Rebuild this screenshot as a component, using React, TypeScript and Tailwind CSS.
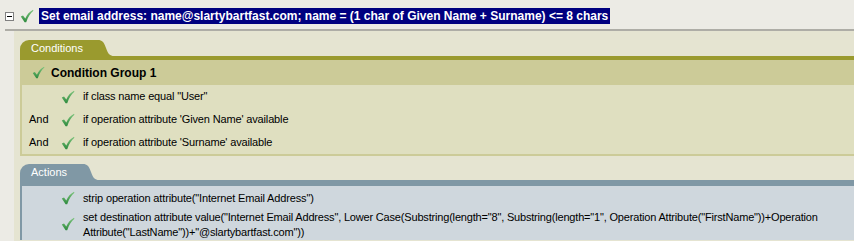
import type { ReactNode } from 'react'

const FONT = { fontFamily: '"Liberation Sans", Arial, sans-serif' }

function Check({ className = '' }: { className?: string }) {
  return (
    <svg viewBox="0 0 14 14" className={className} aria-hidden>
      <defs>
        <linearGradient id="chk" x1="0" y1="0" x2="0" y2="1">
          <stop offset="0" stopColor="#7cc47c" />
          <stop offset="1" stopColor="#2e8b3e" />
        </linearGradient>
      </defs>
      <path d="M0.8 7.6 L3 6.4 L5.3 9.4 C7 5.5 9.5 2.8 13 0.8 L13.4 1.7 C10.5 4 8.2 7.5 6.2 13.2 L4.6 13.2 Z" fill="url(#chk)" />
    </svg>
  )
}

function Tab({ label, color, bodyW }: { label: string; color: string; bodyW: string }) {
  return (
    <div className="flex items-end h-[16px]">
      <div className={`${bodyW} h-full rounded-tl-[9px] pl-[11px] text-[11px] leading-[16px] text-white`} style={{ backgroundColor: color }}>
        {label}
      </div>
      <svg width="16" height="16" viewBox="0 0 16 16" className="block">
        <path d="M0 0 C4 0 6 2 8 8 C10 14 12 16 16 16 L0 16 Z" fill={color} />
      </svg>
    </div>
  )
}

function Row({ and, children, h = 'h-[23px]' }: { and?: boolean; children: ReactNode; h?: string }) {
  return (
    <div className={`flex items-center ${h}`}>
      <span className="w-[39px] pl-[7px] text-[11px]">{and ? 'And' : ''}</span>
      <Check className="w-[14px] h-[14px]" />
      <span className="ml-[8px] text-[11px] tracking-[-0.15px] text-black">{children}</span>
    </div>
  )
}

export default function App() {
  return (
    <div className="w-[854px] h-[241px] overflow-hidden bg-[#ecebe5] text-black" style={FONT}>
      {/* header */}
      <div className="flex items-center h-[29px] pt-[3px]">
        <div className="ml-[5px] w-[9px] h-[9px] border border-[#808080] bg-white flex items-center justify-center">
          <div className="w-[5px] h-[1px] bg-black" />
        </div>
        <Check className="ml-[6px] w-[14px] h-[14px]" />
        <div className="ml-[5px] h-[16px] px-[2px] bg-[#000080] text-white font-bold text-[12px] leading-[16px] whitespace-nowrap">
          Set email address: name@slartybartfast.com; name = (1 char of Given Name + Surname) &lt;= 8 chars
        </div>
      </div>

      <div className="ml-[5px] border-t-2 border-[#aeada6] flex h-[212px]">
        <div className="w-[9px] shrink-0" />
        <div className="flex-1 bg-[#e5e4d1] pl-[6px] pt-[9px]">
          {/* Conditions */}
          <Tab label="Conditions" color="#9a9a2e" bodyW="w-[78px]" />
          <div className="h-[4px] bg-[#9a9a2e]" />
          <div className="border-l-2 border-b-2 border-[#cccb98] bg-[#dfdfc0]">
            <div className="h-[25px] bg-[#cccb98] flex items-center pl-[10px]">
              <Check className="w-[13px] h-[13px]" />
              <span className="ml-[6px] font-bold text-[12px]">Condition Group 1</span>
            </div>
            <Row>if class name equal "User"</Row>
            <Row and>if operation attribute 'Given Name' available</Row>
            <Row and>if operation attribute 'Surname' available</Row>
          </div>

          {/* Actions */}
          <div className="mt-[8px]">
            <Tab label="Actions" color="#8098a5" bodyW="w-[63px]" />
            <div className="h-[6px] bg-[#8098a5]" />
            <div className="border-l-2 border-[#8098a5] bg-[#cfd7dd] pt-[2px]">
              <Row h="h-[20px]">strip operation attribute("Internet Email Address")</Row>
              <div className="flex items-center">
                <span className="w-[39px]" />
                <Check className="w-[14px] h-[14px]" />
                <span className="ml-[8px] text-[11px] tracking-[-0.18px] leading-[15px] pt-[2px]">
                  set destination attribute value("Internet Email Address", Lower Case(Substring(length="8", Substring(length="1", Operation Attribute("FirstName"))+Operation
                  <br />
                  Attribute("LastName"))+"@slartybartfast.com"))
                </span>
              </div>
            </div>
          </div>
        </div>
      </div>
    </div>
  )
}
